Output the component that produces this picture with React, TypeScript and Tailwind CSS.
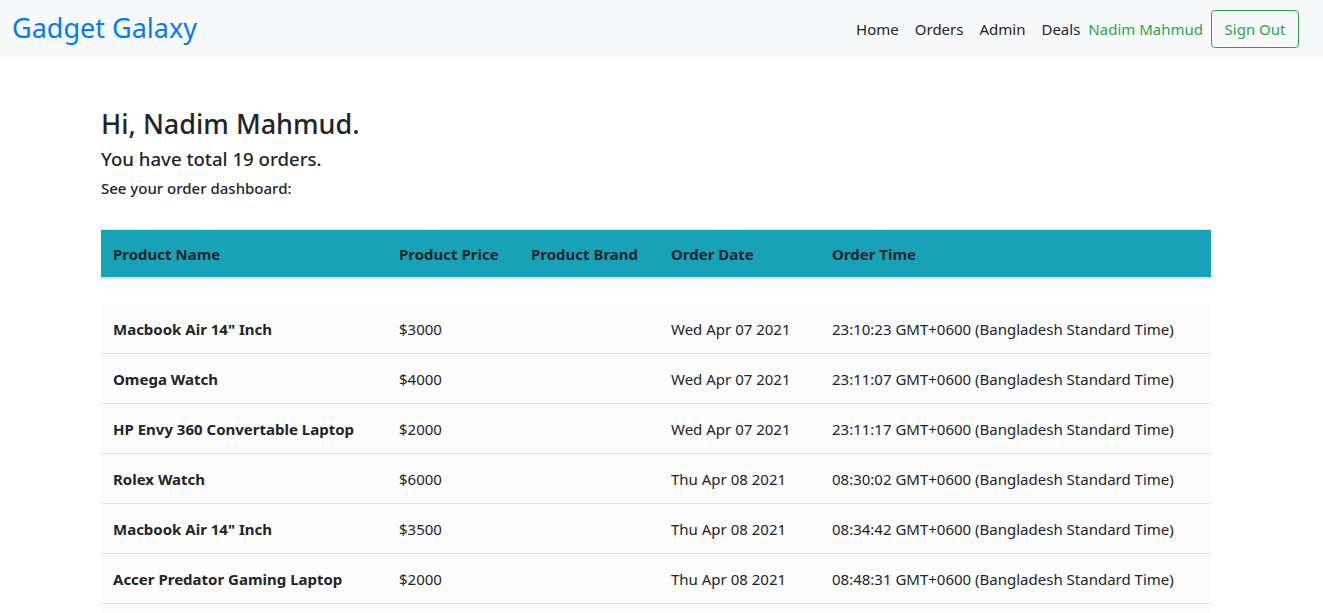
import React from "react";

const rows = [
  { name: 'Macbook Air 14" Inch', price: "$3000", date: "Wed Apr 07 2021", time: "23:10:23 GMT+0600 (Bangladesh Standard Time)" },
  { name: "Omega Watch", price: "$4000", date: "Wed Apr 07 2021", time: "23:11:07 GMT+0600 (Bangladesh Standard Time)" },
  { name: "HP Envy 360 Convertable Laptop", price: "$2000", date: "Wed Apr 07 2021", time: "23:11:17 GMT+0600 (Bangladesh Standard Time)" },
  { name: "Rolex Watch", price: "$6000", date: "Thu Apr 08 2021", time: "08:30:02 GMT+0600 (Bangladesh Standard Time)" },
  { name: 'Macbook Air 14" Inch', price: "$3500", date: "Thu Apr 08 2021", time: "08:34:42 GMT+0600 (Bangladesh Standard Time)" },
  { name: "Accer Predator Gaming Laptop", price: "$2000", date: "Thu Apr 08 2021", time: "08:48:31 GMT+0600 (Bangladesh Standard Time)" },
  { name: "Apple Watch", price: "$1000", date: "Thu Apr 08 2021", time: "09:02:11 GMT+0600 (Bangladesh Standard Time)" },
];

const grid = "grid grid-cols-[286px_132px_140px_161px_391px]";

export default function App() {
  return (
    <div className="min-h-screen bg-white text-[#212529] text-[15px]" style={{ fontFamily: '"Noto Sans", sans-serif' }}>
      <nav className="h-[57px] bg-[#f8f9fa] flex items-center pl-3 pr-6">
        <span className="text-[27px] leading-none text-[#007bff] -mt-[3px]">Gadget Galaxy</span>
        <div className="ml-auto flex items-center text-[15px]">
          <span className="px-2 pt-[2px]">Home</span>
          <span className="px-2 pt-[2px]">Orders</span>
          <span className="px-2 pt-[2px]">Admin</span>
          <span className="px-2 pt-[2px]">Deals</span>
          <span className="text-[#28a745] pt-[2px]">Nadim Mahmud</span>
          <button className="ml-2 h-[38px] w-[88px] pt-[2px] border border-[#28a745] rounded text-[#28a745]">Sign Out</button>
        </div>
      </nav>
      <main className="pl-[101px] pt-[50px]">
        <h2 className="text-[27px] leading-[34px] font-medium">Hi, Nadim Mahmud.</h2>
        <h5 className="text-[18.6px] leading-6 font-medium mt-[6px]">You have total 19 orders.</h5>
        <h6 className="text-[15px] leading-5 font-medium mt-[7px]">See your order dashboard:</h6>
        <div className="w-[1110px] mt-[31px]">
          <div className={`${grid} bg-[#17a2b8] border-t border-[#dee2e6] border-b-2 h-[50px] items-center font-bold pt-[2px]`}>
            <div className="px-3">Product Name</div>
            <div className="px-3">Product Price</div>
            <div className="px-3">Product Brand</div>
            <div className="px-3">Order Date</div>
            <div className="px-3">Order Time</div>
          </div>
          <div className="h-[25px]" />
          {rows.map((r, i) => (
            <div key={i} className={`${grid} bg-[#fcfcfc] border-b border-[#dee2e6] h-[50px] items-center pt-[2px]`}>
              <div className="px-3 font-bold">{r.name}</div>
              <div className="px-3">{r.price}</div>
              <div className="px-3"></div>
              <div className="px-3">{r.date}</div>
              <div className="px-3 whitespace-nowrap">{r.time}</div>
            </div>
          ))}
        </div>
      </main>
    </div>
  );
}
